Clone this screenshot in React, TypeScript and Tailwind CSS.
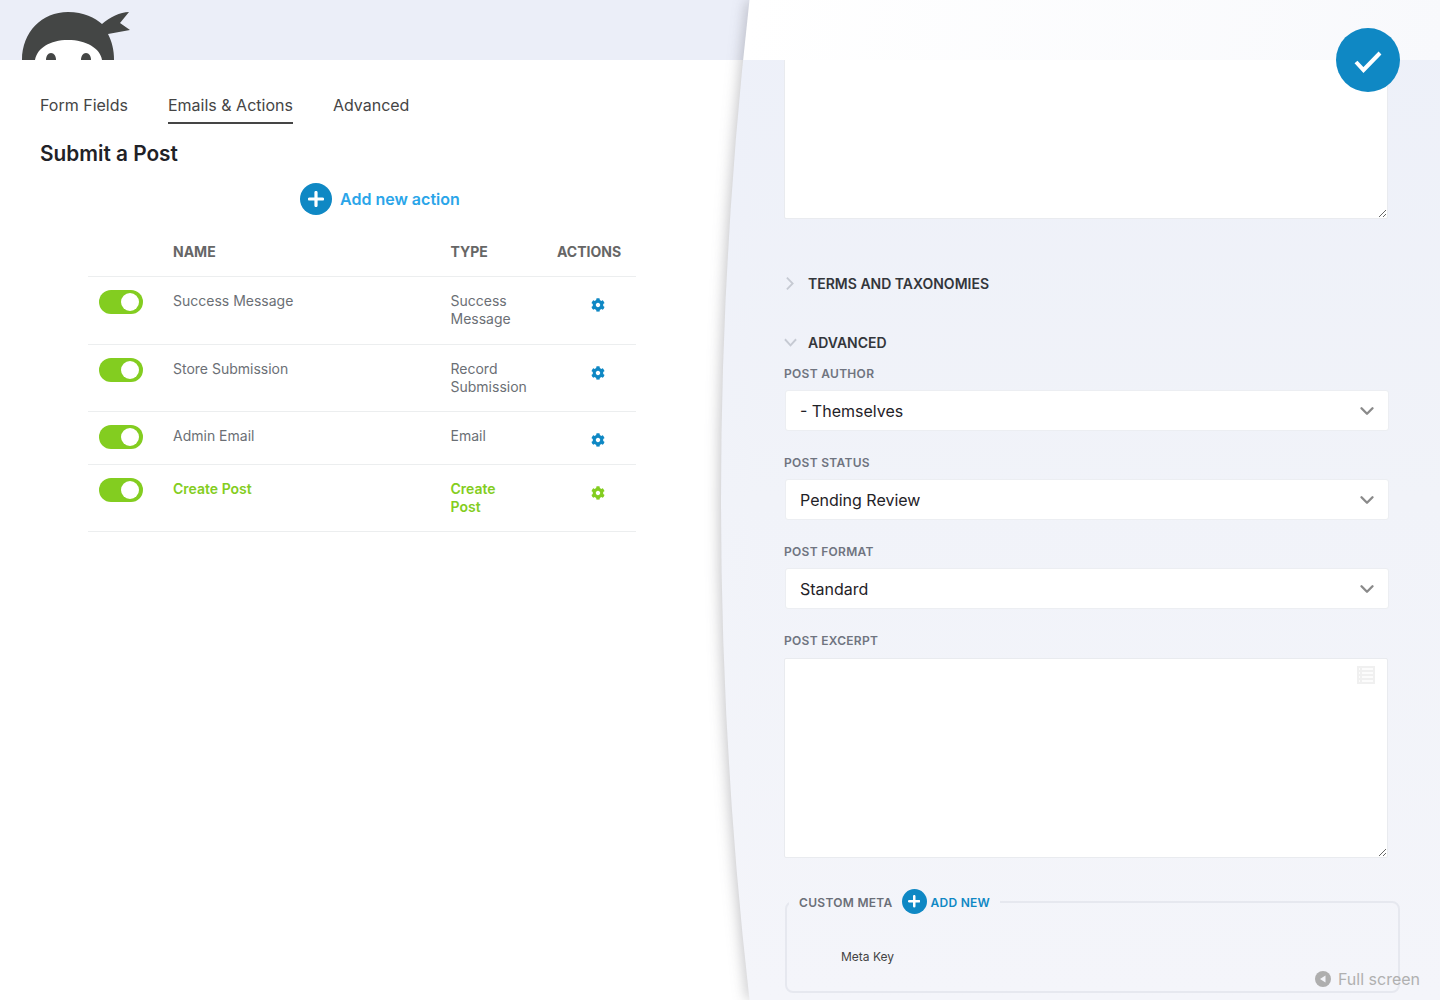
import { FaCog } from "react-icons/fa";
import { ChevronDown } from "lucide-react";

const rows = [
  { name: "Success Message", type: ["Success", "Message"], height: "h-[67.5px]" },
  { name: "Store Submission", type: ["Record", "Submission"], height: "h-[67.5px]" },
  { name: "Admin Email", type: ["Email"], height: "h-[53px]" },
  { name: "Create Post", type: ["Create", "Post"], height: "h-[67px]", active: true },
];

const NinjaLogo = () => (
  <svg width="140" height="60" viewBox="0 0 140 60" className="block">
    <path d="M22 60C22 32 42 12 68 12C84 12 95 18 102 24C110 17 120 12 129 12L120 23L130 30L108 34C112 42 114 50 114 60Z" fill="#444645" />
    <path d="M35 60C37 48 50 40 68 40C86 40 100 48 102 60Z" fill="#fff" />
    <path d="M46 60C46 56 48 53 51 53C54 53 56 56 56 60Z" fill="#444645" />
    <path d="M81 60C81 56 83 53 86 53C89 53 91 56 91 60Z" fill="#444645" />
  </svg>
);

const PlusCircle = ({ size }: { size: string }) => (
  <span className={`${size} flex shrink-0 items-center justify-center rounded-full bg-[#0f88c4]`}>
    <svg viewBox="0 0 16 16" className="h-[50%] w-[50%]">
      <path d="M8 1.5V14.5M1.5 8H14.5" stroke="#fff" strokeWidth="3.2" strokeLinecap="round" />
    </svg>
  </span>
);

const Toggle = () => (
  <span className="flex h-6 w-11 items-center justify-end rounded-full bg-[#83cd20] pr-[4px]">
    <span className="h-[18px] w-[18px] rounded-full bg-white" />
  </span>
);

const SelectField = ({ label, value }: { label: string; value: string }) => (
  <div className="mb-[24px]">
    <div className="mb-[8px] text-[12px] leading-[16px] font-semibold tracking-[0.3px] text-[#6f7480]">{label}</div>
    <div className="ml-px flex h-[41px] w-[604px] items-center justify-between rounded-[3px] border border-[#eceef2] bg-white pr-[10px] pl-[14px] text-[16px] text-[#1f2227]">
      <span>{value}</span>
      <ChevronDown className="mt-px h-[22px] w-[22px] text-[#8a8a8a]" strokeWidth={2.6} />
    </div>
  </div>
);

const App = () => {
  return (
    <div className="relative flex h-[1000px] w-[1440px] overflow-hidden bg-white font-['Inter',sans-serif]">
      <main className="w-[750px] shrink-0">
        <header className="h-[60px] bg-[#ebeef8] pl-0">
          <NinjaLogo />
        </header>

        <nav className="flex gap-10 pt-[28px] pl-10 text-[16px] leading-[34px] text-[#454545]">
          <span>Form Fields</span>
          <span className="border-b-2 border-[#454545]">Emails &amp; Actions</span>
          <span>Advanced</span>
        </nav>

        <h1 className="mt-[15px] pl-10 text-[20.8px] leading-[30px] font-semibold text-[#1f2227]">Submit a Post</h1>

        <button className="mt-[14px] ml-[300px] flex items-center gap-[8px]">
          <PlusCircle size="h-8 w-8" />
          <span className="text-[16px] font-semibold text-[#2aa5e9]">Add new action</span>
        </button>

        <div className="mt-[22px] ml-[88px] w-[548px]">
          <div className="grid h-[40px] grid-cols-[85px_277.5px_106.5px_79px] items-center border-b border-[#eceeef] pb-[10px] text-[14px] font-bold text-[#666]">
            <span />
            <span>NAME</span>
            <span>TYPE</span>
            <span>ACTIONS</span>
          </div>
          {rows.map((row) => (
            <div
              key={row.name}
              className={`grid ${row.height} grid-cols-[85px_277.5px_106.5px_79px] border-b border-[#eceeef] text-[14px] leading-[18px] ${row.active ? "font-semibold text-[#83cd20]" : "text-[#6b6f75]"}`}
            >
              <span className="pt-[13px] pl-[11px]">
                <Toggle />
              </span>
              <span className="pt-[15px]">{row.name}</span>
              <span className="pt-[15px]">
                {row.type.map((line) => (
                  <span key={line} className="block">
                    {line}
                  </span>
                ))}
              </span>
              <span className="pt-[21px] pl-[34px]">
                <FaCog className={`h-[14px] w-[14px] ${row.active ? "text-[#83cd20]" : "text-[#0f88c4]"}`} />
              </span>
            </div>
          ))}
        </div>
      </main>

      <aside className="flex-1 bg-[linear-gradient(180deg,#edf0f9_0%,#f1f3f9_50%,#f4f5fa_100%)]">
        <div className="relative z-10 h-[60px] bg-[linear-gradient(100deg,#ffffff_0%,#f8f9fc_100%)]" />
        <div className="h-[940px] overflow-hidden pl-[34px]">
          <textarea className="-mt-[41px] block h-[200px] w-[604px] rounded-[2px] border border-[#e9ebef] bg-white outline-none" />

          <div className="mt-[53px] flex h-[22px] items-center text-[14px] font-semibold text-[#33363b]">
            <svg viewBox="0 0 9 15" className="mr-[14px] ml-[2px] h-[15px] w-[8px]">
              <path d="M1 1L7.5 7.5L1 14" fill="none" stroke="#c6cad3" strokeWidth="2" />
            </svg>
            <span>TERMS AND TAXONOMIES</span>
          </div>
          <div className="mt-[37px] flex h-[22px] items-center text-[14px] font-semibold text-[#33363b]">
            <svg viewBox="0 0 14 9" className="mr-[11px] -mb-px h-[9px] w-[13px]">
              <path d="M1 1L7 7.5L13 1" fill="none" stroke="#c6cad3" strokeWidth="2" />
            </svg>
            <span>ADVANCED</span>
          </div>

          <div className="mt-[13px]">
            <SelectField label="POST AUTHOR" value="- Themselves" />
            <SelectField label="POST STATUS" value="Pending Review" />
            <SelectField label="POST FORMAT" value="Standard" />
          </div>

          <div className="relative w-[604px]">
            <div className="mb-[9px] text-[12px] leading-[16px] font-semibold tracking-[0.3px] text-[#6f7480]">POST EXCERPT</div>
            <textarea className="block h-[200px] w-[604px] rounded-[2px] border border-[#e9ebef] bg-white outline-none" />
            <svg viewBox="0 0 18 18" className="absolute top-[33px] right-[13px] h-[18px] w-[18px]">
              <rect width="18" height="18" fill="#f0f0f0" />
              <path d="M5 3H16M5 7H16M5 11H16M5 15H16" stroke="#fff" strokeWidth="1.6" />
              <path d="M2 3H3M2 7H3M2 11H3M2 15H3" stroke="#fff" strokeWidth="1.6" />
            </svg>
          </div>

          <fieldset className="mt-[31px] ml-px h-[104px] w-[615px] rounded-[8px] border-2 border-[#e6e8ef] px-[2px]">
            <legend className="flex h-[25px] items-center px-[10px] text-[12px] font-semibold tracking-[0.3px]">
              <span className="pt-[2px] text-[#6b6f78]">CUSTOM META</span>
              <span className="mr-[4px] ml-[9px]">
                <PlusCircle size="h-[25px] w-[25px]" />
              </span>
              <span className="pt-[2px] tracking-[0.25px] text-[#0f88c4]">ADD NEW</span>
            </legend>
            <div className="mt-[35px] ml-[52px] text-[12px] leading-[16px] text-[#444]">Meta Key</div>
          </fieldset>
        </div>
      </aside>

      {/* curved edge of the settings drawer */}
      <svg width="60" height="1000" viewBox="690 0 60 1000" className="pointer-events-none absolute top-0 left-[690px] z-20">
        <defs>
          <linearGradient id="panelFill" x1="0" y1="0" x2="0" y2="1">
            <stop offset="0" stopColor="#ffffff" />
            <stop offset="0.06" stopColor="#ffffff" />
            <stop offset="0.06" stopColor="#edf0f9" />
            <stop offset="0.5" stopColor="#f1f3f9" />
            <stop offset="1" stopColor="#f4f5fa" />
          </linearGradient>
        </defs>
        <path
          d="M749.5 0Q692.5 500 749.5 1000H760V0Z"
          fill="url(#panelFill)"
          style={{ filter: "drop-shadow(-2px 0 7px rgba(70,72,80,0.32))" }}
        />
      </svg>

      <button className="absolute top-7 right-10 z-30 flex h-16 w-16 items-center justify-center rounded-full bg-[#0f88c4]">
        <svg viewBox="0 0 32 32" className="h-8 w-8">
          <path d="M4 18L11.5 26L28 9" fill="none" stroke="#fff" strokeWidth="4" />
        </svg>
      </button>

      <div className="absolute right-5 bottom-[9px] z-30 flex items-center gap-[7px] text-[16px] leading-[24px] text-[#b0b0b0]">
        <svg viewBox="0 0 16 16" className="h-4 w-4">
          <circle cx="8" cy="8" r="8" fill="#aeaeae" />
          <path d="M10.5 4.5V11.5L5 8Z" fill="#f3f4f9" />
        </svg>
        <span>Full screen</span>
      </div>
    </div>
  );
};

export default App;
